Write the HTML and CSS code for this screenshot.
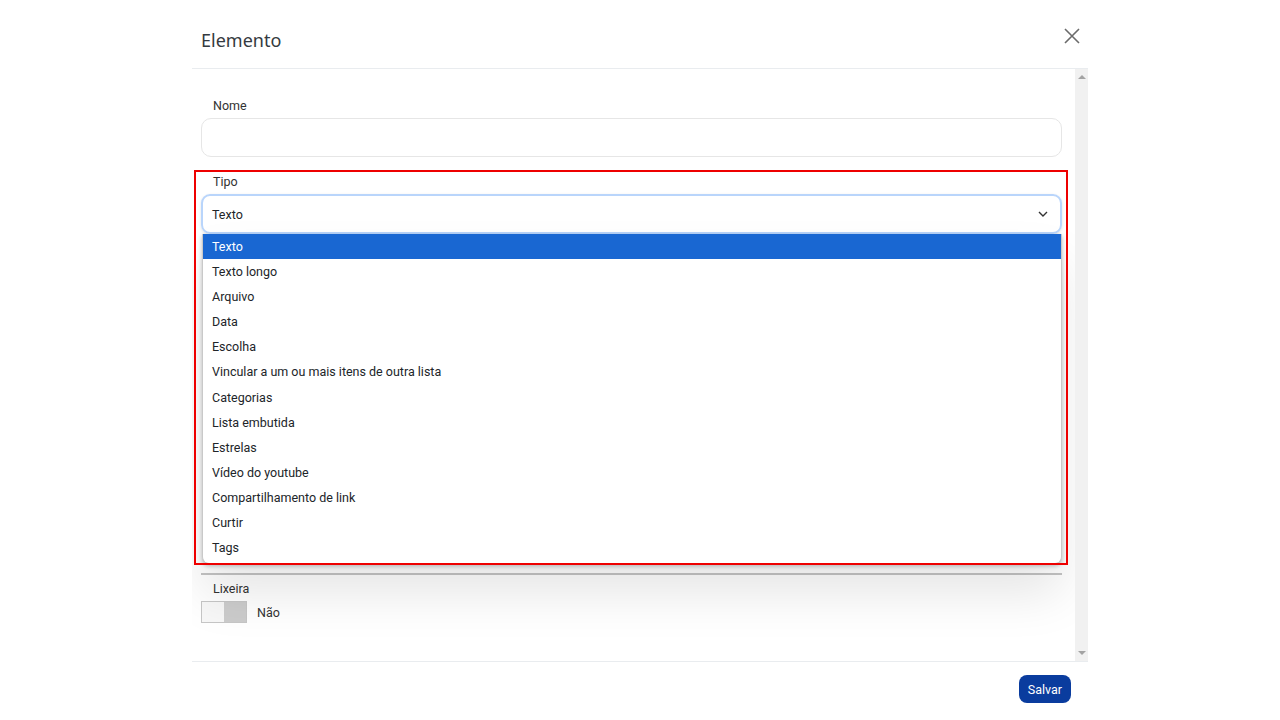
FILE: index.html
```html
<!DOCTYPE html>
<html lang="pt">
<head>
<meta charset="utf-8">
<title>Elemento</title>
<link rel="stylesheet" href="styles.css">
</head>
<body>
<div class="modal">
  <div class="modal-header">
    <h1 class="title">Elemento</h1>
    <button class="close" aria-label="Fechar">
      <svg width="16" height="16" viewBox="0 0 16 16"><path d="M1 1L15 15M15 1L1 15" stroke="#6b6b6b" stroke-width="1.6" fill="none"/></svg>
    </button>
  </div>
  <div class="modal-body">
    <div class="content">
      <div class="field">
        <label class="label">Nome</label>
        <div class="input"></div>
      </div>
      <div class="field tipo">
        <label class="label">Tipo</label>
        <div class="select">
          <span>Texto</span>
          <svg class="chev" width="10" height="6" viewBox="0 0 10 6"><path d="M1 1L5 5L9 1" stroke="#333" stroke-width="1.4" fill="none"/></svg>
        </div>
        <ul class="dropdown">
          <li class="opt selected">Texto</li>
          <li class="opt">Texto longo</li>
          <li class="opt">Arquivo</li>
          <li class="opt">Data</li>
          <li class="opt">Escolha</li>
          <li class="opt">Vincular a um ou mais itens de outra lista</li>
          <li class="opt">Categorias</li>
          <li class="opt">Lista embutida</li>
          <li class="opt">Estrelas</li>
          <li class="opt">Vídeo do youtube</li>
          <li class="opt">Compartilhamento de link</li>
          <li class="opt">Curtir</li>
          <li class="opt">Tags</li>
        </ul>
        <div class="highlight"></div>
      </div>
      <div class="hidden-fields"></div>
      <div class="divider"></div>
      <div class="field lixeira">
        <label class="label">Lixeira</label>
        <div class="toggle-row">
          <div class="toggle"><span class="t-on"></span><span class="t-off"></span></div>
          <span class="toggle-text">Não</span>
        </div>
      </div>
    </div>
    <div class="scrollbar">
      <span class="arrow up"></span>
      <span class="arrow down"></span>
    </div>
  </div>
  <div class="modal-footer">
    <button class="save">Salvar</button>
  </div>
</div>
</body>
</html>
```

FILE: styles.css
```css
* { box-sizing: border-box; }
html, body { margin: 0; padding: 0; background: #fff; }
body { font-family: Roboto, "Liberation Sans", Arial, sans-serif; color: #212529; height: 720px; overflow: hidden; }

.modal { width: 896px; margin-left: 192px; height: 720px; display: flex; flex-direction: column; background: #fff; }

.modal-header { height: 69px; border-bottom: 1px solid #e9ecef; display: flex; justify-content: space-between; align-items: flex-start; padding: 29px 8px 0 9px; }
.title { margin: 0; font-family: "Noto Sans", "Open Sans", sans-serif; font-weight: 400; font-size: 18px; line-height: 22px; color: #343a40; }
.close { border: 0; background: none; padding: 0; margin-top: -1px; width: 16px; height: 16px; cursor: pointer; }
.close svg { display: block; }

.modal-body { height: 593px; display: flex; border-bottom: 1px solid #e9ecef; }
.content { flex: 1; padding: 29px 13px 0 9px; position: relative; overflow: hidden; }

.field { display: flex; flex-direction: column; }
.label { font-size: 12.5px; line-height: 16px; color: #333; padding-left: 12px; margin-bottom: 4px; }
.input { height: 39px; border: 1px solid #e6e6e6; border-radius: 10px; background: #fff; }

.tipo { margin-top: 17px; position: relative; }
.select { height: 40px; border: 2px solid #b9d5fb; border-radius: 9px; display: flex; align-items: center; justify-content: space-between; padding: 0 12px 0 9px; font-size: 12.5px; color: #212529; box-shadow: 0 1px 3px rgba(0,0,0,0.12); }
.chev { display: block; }

.dropdown { position: absolute; left: 1px; right: 0; top: 60px; margin: 0; padding: 0 0 3px; list-style: none; background: #fff; border: 1px solid #c9c9c9; border-top: 0; border-radius: 0 0 7px 7px; box-shadow: 0 2px 4px rgba(0,0,0,0.25), 0 30px 50px rgba(0,0,0,0.10); z-index: 5; }
.opt { height: 25.1px; line-height: 25px; padding-left: 9px; font-size: 12.5px; color: #212529; }
.opt.selected { background: #1967d2; color: #fff; }

.highlight { position: absolute; left: -7px; top: -4px; width: 874px; height: 395px; border: 2px solid #ee0000; z-index: 6; pointer-events: none; }

.hidden-fields { height: 339px; }
.divider { height: 2px; background: #c4c4c4; }

.lixeira { margin-top: 6px; }
.lixeira .label { margin-bottom: 4px; }
.toggle-row { display: flex; align-items: center; gap: 10px; }
.toggle { width: 46px; height: 22px; border: 1px solid #c6c6c6; display: flex; }
.t-on { flex: 1; background: #f7f7f7; }
.t-off { flex: 1; background: #cccccc; }
.toggle-text { font-size: 12.5px; color: #333; }

.scrollbar { width: 13px; background: #f1f1f1; position: relative; }
.arrow { position: absolute; left: 3px; width: 0; height: 0; border-left: 4px solid transparent; border-right: 4px solid transparent; }
.arrow.up { top: 6px; border-bottom: 4px solid #a3a3a3; }
.arrow.down { bottom: 6px; border-top: 4px solid #a3a3a3; }

.modal-footer { flex: 1; display: flex; justify-content: flex-end; align-items: flex-start; padding: 13px 17px 0 0; }
.save { height: 28px; padding: 0 9px; border: 0; border-radius: 8px; background: #0a3c9e; color: #fff; font-family: Roboto, "Liberation Sans", sans-serif; font-size: 12.5px; cursor: pointer; }
```
